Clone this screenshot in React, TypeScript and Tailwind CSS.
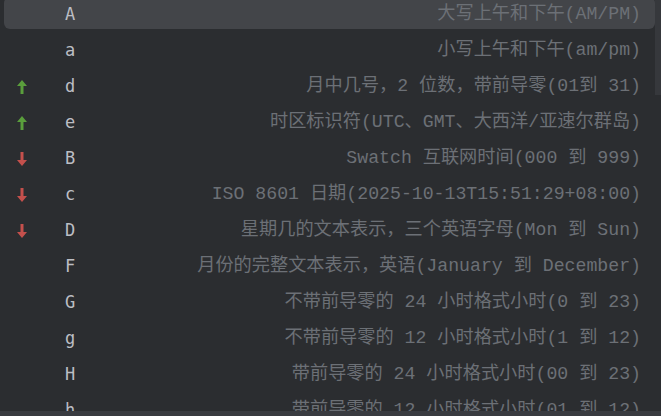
import React from "react";

type Row = { key: string; dir?: "up" | "down"; desc: string };

const rows: Row[] = [
  { key: "A", desc: "大写上午和下午(AM/PM)" },
  { key: "a", desc: "小写上午和下午(am/pm)" },
  { key: "d", dir: "up", desc: "月中几号，2 位数，带前导零(01到 31)" },
  { key: "e", dir: "up", desc: "时区标识符(UTC、GMT、大西洋/亚速尔群岛)" },
  { key: "B", dir: "down", desc: "Swatch 互联网时间(000 到 999)" },
  { key: "c", dir: "down", desc: "ISO 8601 日期(2025-10-13T15:51:29+08:00)" },
  { key: "D", dir: "down", desc: "星期几的文本表示，三个英语字母(Mon 到 Sun)" },
  { key: "F", desc: "月份的完整文本表示，英语(January 到 December)" },
  { key: "G", desc: "不带前导零的 24 小时格式小时(0 到 23)" },
  { key: "g", desc: "不带前导零的 12 小时格式小时(1 到 12)" },
  { key: "H", desc: "带前导零的 24 小时格式小时(00 到 23)" },
  { key: "h", desc: "带前导零的 12 小时格式小时(01 到 12)" },
];

function Arrow({ dir }: { dir: "up" | "down" }) {
  if (dir === "up") {
    return (
      <svg width="10" height="14" viewBox="0 0 10 14">
        <path d="M5 0 L10 6 H6.5 V14 H3.5 V6 H0 Z" fill="#5a9e3c" />
      </svg>
    );
  }
  return (
    <svg width="10" height="14" viewBox="0 0 10 14">
      <path d="M5 14 L10 8 H6.5 V0 H3.5 V8 H0 Z" fill="#c4504c" />
    </svg>
  );
}

export default function App() {
  return (
    <div className="relative flex h-[416px] w-[661px] flex-col overflow-hidden bg-[#2b2d30]">
      <div className="flex-1 overflow-hidden">
        <div className="-mt-[3px] flex flex-col gap-[4px]">
          {rows.map((r, i) => (
            <div
              key={r.key}
              className={`ml-[4px] mr-[6px] flex h-[32px] shrink-0 items-center rounded-md pt-[4px] ${
                i === 0 ? "bg-[#434549]" : ""
              }`}
            >
              <div className="flex w-[61px] shrink-0 items-center pl-[13px]">
                {r.dir && <Arrow dir={r.dir} />}
              </div>
              <div className="w-[60px] shrink-0 font-['DejaVu_Sans_Mono',monospace] text-[17px] text-[#bcbec4]">
                {r.key}
              </div>
              <div className="flex-1 truncate pr-[14px] text-right font-['Liberation_Mono','Noto_Sans_CJK_SC',monospace] text-[18.2px] text-[#6c7076]">
                {r.desc}
              </div>
            </div>
          ))}
        </div>
      </div>
      <div className="h-[5px] shrink-0 bg-[#393b40]" />
      <div className="absolute right-0 top-0 h-[95px] w-[6px] bg-[#36383c]" />
    </div>
  );
}
